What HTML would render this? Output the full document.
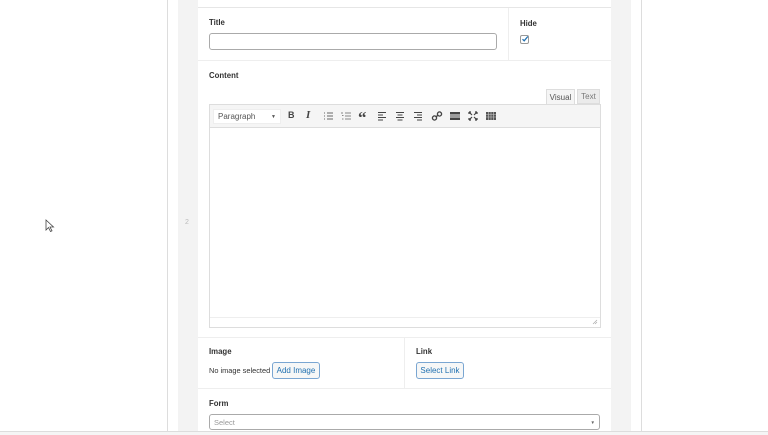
<!DOCTYPE html>
<html><head><meta charset="utf-8"><style>
*{margin:0;padding:0;box-sizing:border-box}
body{width:768px;height:435px;background:#fff;position:relative;overflow:hidden;font-family:"Liberation Sans",sans-serif;font-size:8px;color:#23282d}
.a{position:absolute}
.lbl{font-weight:bold;font-size:7.8px;color:#333}
.ic{position:absolute;top:110px;width:12px;height:12px}
.btn{position:absolute;border:1px solid #7aa6d2;border-radius:3px;background:#f6f7f7;color:#2271b1;font-size:8px;text-align:center;line-height:14px}
</style></head><body>
<div class="a" style="left:167px;top:0;width:1px;height:432px;background:#ddd"></div>
<div class="a" style="left:641px;top:0;width:1px;height:432px;background:#ddd"></div>
<div class="a" style="left:178px;top:0;width:453px;height:432px;background:#f3f3f3"></div>
<div class="a" style="left:198px;top:0;width:413px;height:432px;background:#fff"></div>
<div class="a" style="left:198px;top:7px;width:413px;height:1px;background:#e6e6e6"></div>
<div class="a" style="left:0;top:431px;width:768px;height:1px;background:#ddd"></div>
<div class="a" style="left:0;top:432px;width:768px;height:3px;background:#f5f5f5"></div>
<div class="a" style="left:185px;top:219px;color:#bbb;font-size:7px">2</div>
<svg class="a" style="left:45px;top:219px" width="10" height="14" viewBox="0 0 10 14"><path d="M1 1 L1 11 L3.5 8.5 L5.5 12.5 L7 11.8 L5 8 L8.5 8 Z" fill="#fff" stroke="#444" stroke-width="0.8"/></svg>

<div class="a lbl" style="left:209px;top:18px">Title</div>
<div class="a" style="left:209px;top:33px;width:288px;height:17px;border:1px solid #aaa;border-radius:3px"></div>
<div class="a" style="left:508px;top:8px;width:1px;height:52px;background:#eee"></div>
<div class="a lbl" style="left:520px;top:19px">Hide</div>
<div class="a" style="left:520px;top:35px;width:9px;height:9px;border:1px solid #999;border-radius:2px"></div>
<svg class="a" style="left:521px;top:35px" width="8" height="8" viewBox="0 0 8 8"><path d="M1.5 4.2 L3.2 5.8 L6.8 1.5" fill="none" stroke="#2271b1" stroke-width="1.3"/></svg>
<div class="a" style="left:198px;top:60px;width:413px;height:1px;background:#eee"></div>

<div class="a lbl" style="left:209px;top:71px">Content</div>
<div class="a" style="left:546px;top:89px;width:29px;height:16px;background:#f5f5f5;border:1px solid #ddd;border-bottom:none;color:#555;text-align:center;line-height:15px">Visual</div>
<div class="a" style="left:577px;top:89px;width:23px;height:15px;background:#ebebeb;border:1px solid #ddd;color:#777;text-align:center;line-height:14px">Text</div>
<div class="a" style="left:209px;top:104px;width:392px;height:224px;border:1px solid #ddd"></div>
<div class="a" style="left:210px;top:105px;width:390px;height:23px;background:#f5f5f5;border-bottom:1px solid #ddd"></div>
<div class="a" style="left:213px;top:109px;width:68px;height:15px;background:#fff;border:1px solid #eee;color:#555;line-height:13px;padding-left:4px">Paragraph<span style="position:absolute;right:4px;font-size:5px;top:1px">▼</span></div>
<div class="a" style="left:288px;top:110px;font-weight:bold;font-size:9px;color:#444">B</div>
<div class="a" style="left:306px;top:109px;font-style:italic;font-weight:bold;font-family:'Liberation Serif',serif;font-size:11px;color:#444">I</div>
<svg class="ic" style="left:322px"><g stroke="#666" stroke-width="1"><path d="M2 3h1M5 3h6M2 6h1M5 6h6M2 9h1M5 9h6"/></g></svg>
<svg class="ic" style="left:340px"><g stroke="#888" stroke-width="1"><path d="M2 2v2M2 5.5h1.5M2 9h1.5M5 3h6M5 6h6M5 9h6"/></g></svg>
<div class="a" style="left:358px;top:109px;font-weight:bold;font-size:17px;line-height:17px;color:#444;font-family:'Liberation Serif',serif">“</div>
<svg class="ic" style="left:376px"><g stroke="#444" stroke-width="1"><path d="M2 2.5h8M2 5h5M2 7.5h8M2 10h5"/></g></svg>
<svg class="ic" style="left:394px"><g stroke="#444" stroke-width="1"><path d="M2 2.5h8M3.5 5h5M2 7.5h8M3.5 10h5"/></g></svg>
<svg class="ic" style="left:412px"><g stroke="#444" stroke-width="1"><path d="M2 2.5h8M5 5h5M2 7.5h8M5 10h5"/></g></svg>
<svg class="ic" style="left:431px"><g stroke="#444" stroke-width="1.3" fill="none"><path d="M5 7 L7 5"/><rect x="1.5" y="6" width="4" height="4" rx="1.8" transform="rotate(-45 3.5 8)"/><rect x="6.5" y="2" width="4" height="4" rx="1.8" transform="rotate(-45 8.5 4)"/></g></svg>
<svg class="ic" style="left:449px"><rect x="1" y="2" width="10" height="2.5" fill="#444"/><rect x="1" y="5.5" width="10" height="1" fill="#444"/><rect x="1" y="7.5" width="10" height="2.5" fill="#444"/></svg>
<svg class="ic" style="left:467px"><g stroke="#444" stroke-width="1.2"><path d="M2 2l3 3M10 2l-3 3M2 10l3-3M10 10l-3-3"/><path d="M2 2h2M2 2v2M10 2h-2M10 2v2M2 10h2M2 10v-2M10 10h-2M10 10v-2"/></g></svg>
<svg class="ic" style="left:485px"><rect x="1" y="2" width="10" height="8" fill="#555"/><g stroke="#ccc" stroke-width="0.6"><path d="M1 4.5h10M1 7h10M3.5 2v8M6 2v8M8.5 2v8"/></g></svg>
<div class="a" style="left:210px;top:317px;width:390px;height:1px;background:#eee"></div>
<svg class="a" style="left:592px;top:319px" width="6" height="6"><path d="M5 1L1 5M5 3L3 5" stroke="#aaa" stroke-width="0.7"/></svg>
<div class="a" style="left:198px;top:337px;width:413px;height:1px;background:#eee"></div>

<div class="a lbl" style="left:209px;top:347px">Image</div>
<div class="a" style="left:209px;top:366px;color:#333;font-size:7.4px;white-space:nowrap">No image selected</div>
<div class="btn" style="left:272px;top:362px;width:48px;height:17px;line-height:15px">Add Image</div>
<div class="a" style="left:404px;top:338px;width:1px;height:50px;background:#eee"></div>
<div class="a lbl" style="left:416px;top:347px">Link</div>
<div class="btn" style="left:416px;top:362px;width:48px;height:17px;line-height:15px">Select Link</div>
<div class="a" style="left:198px;top:388px;width:413px;height:1px;background:#eee"></div>

<div class="a lbl" style="left:209px;top:399px">Form</div>
<div class="a" style="left:209px;top:414px;width:391px;height:16px;border:1px solid #aaa;border-radius:3px;color:#999;line-height:15px;padding-left:4px;font-size:7.5px">Select<span style="position:absolute;right:4px;font-size:4.5px;color:#666">▼</span></div>
</body></html>
